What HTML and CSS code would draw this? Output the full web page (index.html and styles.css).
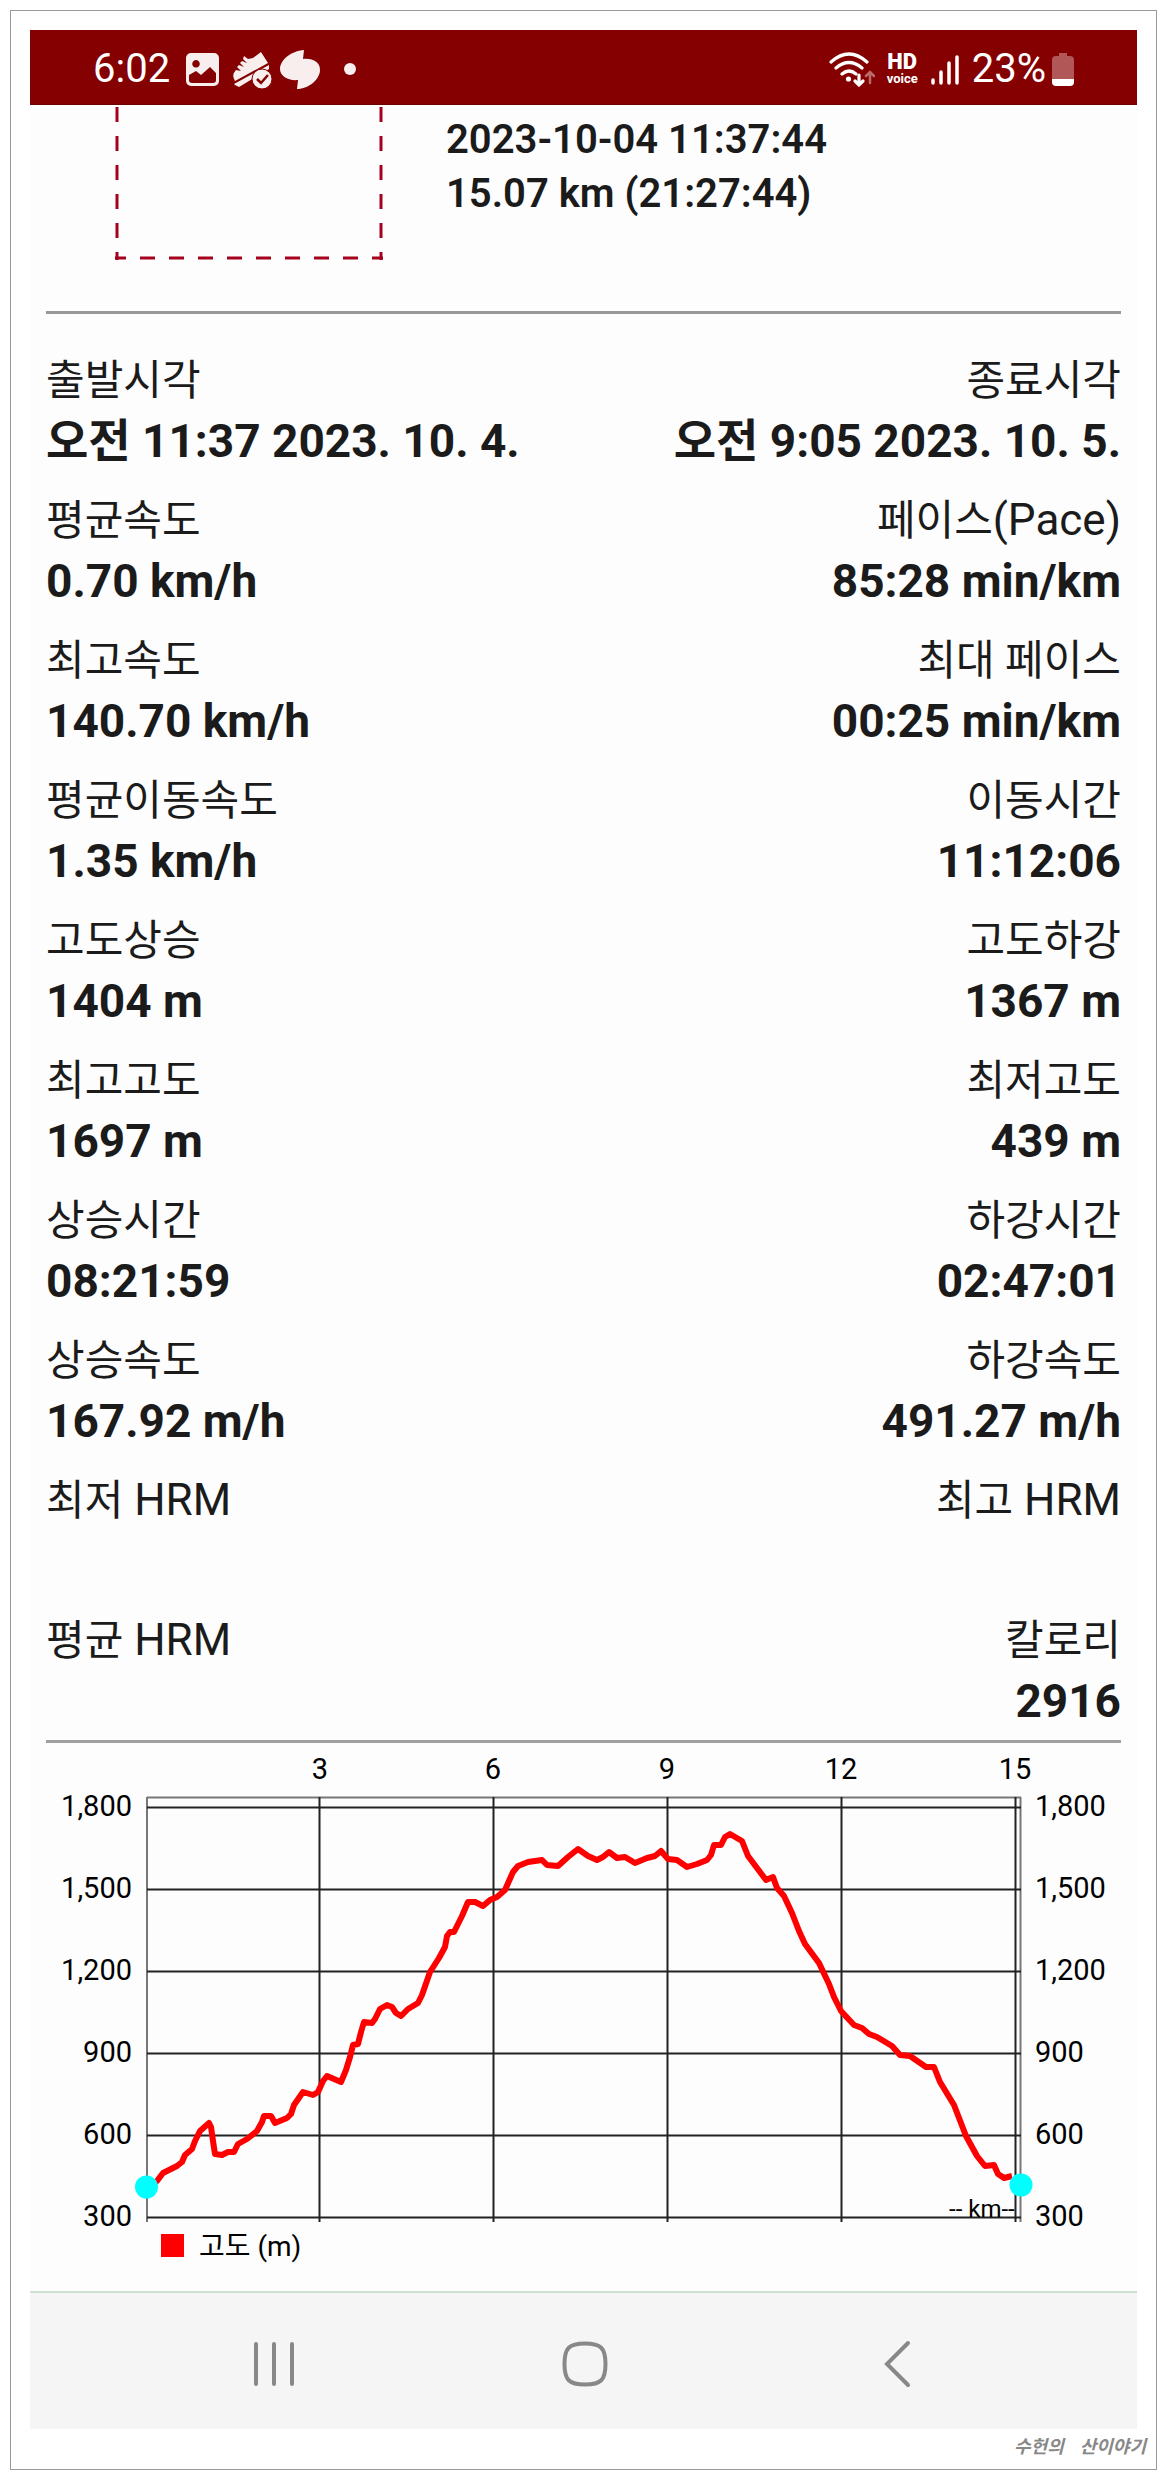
FILE: index.html
```html
<!DOCTYPE html>
<html lang="ko">
<head>
<meta charset="utf-8">
<meta name="viewport" content="width=device-width, initial-scale=1">
<title>산행 기록</title>
<link rel="stylesheet" href="styles.css">
</head>
<body>
<div class="frame">
  <div class="phone">
    <header class="status">
      <div class="status-side">
        <span class="status-text">6:02</span>
        <svg class="status-icon" viewBox="0 0 42 42" aria-hidden="true">
          <path fill="#f8eeee" fill-rule="evenodd" d="M8 5h23a5 5 0 0 1 5 5v23a5 5 0 0 1-5 5H8a5 5 0 0 1-5-5V10a5 5 0 0 1 5-5zM13 12a3.800 3.800 0 1 0 .01 0zM6 27v5q0 3 3 3h21q3 0 3-3v-7l-6-6-9 8-5-4z"/>
        </svg>
        <svg class="status-icon" viewBox="0 0 42 42" aria-hidden="true">
          <g fill="#f8eeee">
            <path d="M13 8l4 3 5-1 8-6 7 11L4 33Q0 27 5 22l5 1-4-4 2-2 5 2-4-4 2-2 5 2-4-4z"/>
            <path d="M38 17v4L8 39l-4-2-1-1z"/>
          </g>
          <circle cx="31" cy="31" r="10" fill="#f8eeee" stroke="#850000" stroke-width="1"/>
          <path d="M26 31l4 4 7-8" fill="none" stroke="#850000" stroke-width="2.500"/>
        </svg>
        <svg class="status-icon" viewBox="0 0 42 42" aria-hidden="true">
          <path fill="#f8eeee" d="M25 2l-1 9c10-1 17 3 17 11 0 9-11 19-23 19l1-9C9 33 1 28 1 21 1 12 12 3 25 2z"/>
        </svg>
        <svg class="status-icon" viewBox="0 0 42 42" aria-hidden="true"><circle cx="23" cy="21" r="6" fill="#f8eeee"/></svg>
      </div>
      <div class="status-side">
        <svg class="wifi" viewBox="0 0 46 42" aria-hidden="true">
          <g fill="none" stroke="#fff" stroke-width="3.200" stroke-linecap="round">
            <path d="M2 14q18-16 36 0M7 20q13-11 26 0M13 26q7-6 14 0"/>
            <path d="M30 27v10M26 33l4 4 4-4"/>
            <path d="M41 35V25M37 28l4-4 4 4" stroke="#b96a6a" stroke-width="2.500"/>
          </g>
          <circle cx="19.500" cy="31" r="2.600" fill="#fff"/>
        </svg>
        <span class="hd"><b>HD</b><span>voice</span></span>
        <svg class="signal" viewBox="0 0 30 42" aria-hidden="true">
          <path d="M3 32v3M11 24v11M19 15v20M27 9v26" stroke="#fff" stroke-width="3.500" stroke-linecap="round"/>
        </svg>
        <span class="charge">
          <span class="status-text">23%</span>
          <svg class="battery" viewBox="0 0 24 42" aria-hidden="true">
            <path d="M8 5h8v3h3q4 0 4 4v19H1V12q0-4 4-4h3z" fill="#b25757"/>
            <path d="M1 31h22v3q0 4-4 4H5q-4 0-4-4z" fill="#fff"/>
          </svg>
        </span>
      </div>
    </header>

    <main>
      <section class="summary">
        <svg class="photo-slot" viewBox="0 0 268 155" aria-hidden="true">
          <g fill="none" stroke="#a5001e" stroke-width="3">
            <path d="M2 2v153M266 2v153" stroke-dasharray="15 14"/>
            <path d="M0 153h11M257 153h11"/>
            <path d="M25 153h230" stroke-dasharray="15 14"/>
          </g>
        </svg>
        <p class="summary-text">2023-10-04 11:37:44<br>15.07 km (21:27:44)</p>
      </section>

      <dl class="stats">
        <div class="stat"><dt>출발시각</dt><dd>오전 11:37 2023. 10. 4.</dd></div>
        <div class="stat"><dt>종료시각</dt><dd>오전 9:05 2023. 10. 5.</dd></div>
        <div class="stat"><dt>평균속도</dt><dd>0.70 km/h</dd></div>
        <div class="stat"><dt>페이스<span class="latin">(Pace)</span></dt><dd>85:28 min/km</dd></div>
        <div class="stat"><dt>최고속도</dt><dd>140.70 km/h</dd></div>
        <div class="stat"><dt>최대 페이스</dt><dd>00:25 min/km</dd></div>
        <div class="stat"><dt>평균이동속도</dt><dd>1.35 km/h</dd></div>
        <div class="stat"><dt>이동시간</dt><dd>11:12:06</dd></div>
        <div class="stat"><dt>고도상승</dt><dd>1404 m</dd></div>
        <div class="stat"><dt>고도하강</dt><dd>1367 m</dd></div>
        <div class="stat"><dt>최고고도</dt><dd>1697 m</dd></div>
        <div class="stat"><dt>최저고도</dt><dd>439 m</dd></div>
        <div class="stat"><dt>상승시간</dt><dd>08:21:59</dd></div>
        <div class="stat"><dt>하강시간</dt><dd>02:47:01</dd></div>
        <div class="stat"><dt>상승속도</dt><dd>167.92 m/h</dd></div>
        <div class="stat"><dt>하강속도</dt><dd>491.27 m/h</dd></div>
        <div class="stat"><dt>최저<span class="latin"> HRM</span></dt><dd></dd></div>
        <div class="stat"><dt>최고<span class="latin"> HRM</span></dt><dd></dd></div>
        <div class="stat"><dt>평균<span class="latin"> HRM</span></dt><dd></dd></div>
        <div class="stat"><dt>칼로리</dt><dd>2916</dd></div>
      </dl>

      <svg class="chart" viewBox="46 1743 1075 548" role="img" aria-label="고도 (m)">
        <g class="grid">
          <path class="edge" d="M147 1797.500H1021M147 1797V2222M1020.500 1797V2222"/>
          <path d="M147 1807.500H1021M147 1889.500H1021M147 1971.500H1021M147 2053.500H1021M147 2135.500H1021M147 2217.500H1021"/>
          <path d="M319.500 1797V2222M493.500 1797V2222M667.500 1797V2222M841.500 1797V2222M1015.500 1797V2222"/>
        </g>
        <g class="tick middle">
          <text x="320" y="1779">3</text><text x="493" y="1779">6</text><text x="667" y="1779">9</text><text x="841" y="1779">12</text><text x="1015" y="1779">15</text>
        </g>
        <g class="tick end">
          <text x="132" y="1816">1,800</text><text x="132" y="1898">1,500</text><text x="132" y="1980">1,200</text><text x="132" y="2062">900</text><text x="132" y="2144">600</text><text x="132" y="2226">300</text>
        </g>
        <g class="tick">
          <text x="1035" y="1816">1,800</text><text x="1035" y="1898">1,500</text><text x="1035" y="1980">1,200</text><text x="1035" y="2062">900</text><text x="1035" y="2144">600</text><text x="1035" y="2226">300</text>
        </g>
        <text class="unit" x="949" y="2217">-- km--</text>
        <polyline class="line" points="147,2187 157,2181 163,2173 177,2166 182,2162 185,2155 192,2149 195,2141 200,2131 209,2123 211,2127 213,2141 215,2154 222,2155 228,2152 234,2152 238,2144 247,2139 257,2131 262,2122 264,2116 271,2116 275,2123 287,2118 291,2114 294,2105 303,2092 313,2095 318,2092 323,2081 327,2076 341,2082 346,2070 350,2057 353,2045 358,2044 361,2032 364,2022 372,2023 375,2019 380,2009 387,2005 392,2007 396,2013 401,2016 408,2009 418,2003 422,1995 430,1972 439,1958 445,1947 447,1936 450,1932 454,1932 462,1916 468,1902 475,1902 483,1906 490,1900 497,1897 505,1890 513,1872 518,1866 528,1862 542,1860 547,1865 558,1866 568,1857 578,1849 588,1856 597,1860 603,1857 609,1852 617,1858 625,1857 635,1863 647,1858 655,1856 661,1851 668,1859 677,1860 687,1867 697,1864 707,1860 711,1855 714,1845 721,1845 725,1837 730,1834 742,1841 748,1856 757,1868 766,1880 773,1877 777,1888 784,1896 792,1913 799,1931 805,1944 819,1963 829,1984 834,1997 841,2011 854,2025 862,2028 869,2034 877,2037 892,2046 900,2055 910,2056 926,2067 934,2067 940,2082 954,2105 966,2136 977,2156 985,2166 994,2165 998,2174 1004,2178 1012,2176"/>
        <circle cx="146.500" cy="2187" r="11.500" fill="#0ff"/>
        <circle cx="1021" cy="2185" r="11.500" fill="#0ff"/>
        <rect x="161" y="2234" width="23" height="23" fill="#f00"/>
        <text class="legend" x="199" y="2256">고도 (m)</text>
      </svg>
    </main>

    <nav class="nav">
      <button type="button" aria-label="최근 앱">
        <svg viewBox="0 0 50 50"><path d="M7 4v40M25 4v40M43 4v40"/></svg>
      </button>
      <button type="button" aria-label="홈">
        <svg viewBox="0 0 50 50"><path d="M25 3.500C41 3.500 45.500 8 45.500 24S41 44.500 25 44.500 4.500 40 4.500 24 9 3.500 25 3.500z"/></svg>
      </button>
      <button type="button" aria-label="뒤로">
        <svg viewBox="0 0 50 50"><path d="M36 3L15 24l21 21"/></svg>
      </button>
    </nav>
  </div>
  <footer class="signature"><span>수헌의</span><span>산이야기</span></footer>
</div>
</body>
</html>
```
FILE: styles.css
```css
* {
  box-sizing: border-box;
}

body {
  margin: 10px;
  background: #fff;
  color: #1b1b1b;
  font-family: Roboto, "Noto Sans CJK KR", sans-serif;
}

p,
dl,
dd {
  margin: 0;
}

svg {
  display: block;
  flex: none;
}

.frame {
  position: relative;
  padding: 19px 19px 0;
  border: 1px solid #999;
  background: #fff;
}

/* lifted paper corners */
.frame::before,
.frame::after {
  content: "";
  position: absolute;
  top: 100%;
  width: 90px;
  height: 9px;
  margin-top: 1px;
  background: linear-gradient(to bottom, #aaa, #f5f5f5);
}

.frame::before {
  left: 3px;
  clip-path: polygon(0 0, 100% 0, 6% 100%);
}

.frame::after {
  right: 3px;
  clip-path: polygon(0 0, 100% 0, 94% 100%);
}

.phone {
  background: #fdfdfd;
}

/* status bar */
.status {
  display: flex;
  justify-content: space-between;
  align-items: center;
  height: 75px;
  padding: 4px 62px 0 63px;
  background: #850000;
  border-bottom: 1px solid #6d0000;
  color: #fff;
}

.status-side {
  display: flex;
  align-items: center;
  gap: 6px;
}

.status-side:last-child {
  gap: 12px;
}

.status-text {
  font-size: 40px;
  line-height: 42px;
}

.status-side > .status-text {
  padding-right: 7px;
}

.status-icon {
  width: 42px;
  height: 42px;
}

.wifi {
  width: 46px;
  height: 42px;
}

.hd {
  display: flex;
  flex-direction: column;
  align-items: center;
  font-weight: 700;
  font-size: 13px;
  line-height: 14px;
}

.hd b {
  font-size: 22px;
  line-height: 20px;
  font-weight: 900;
}

.signal {
  width: 30px;
  height: 42px;
}

.charge {
  display: flex;
  align-items: center;
  gap: 5px;
}

.battery {
  width: 24px;
  height: 42px;
}

/* summary */
main {
  padding: 0 16px;
}

.summary {
  display: flex;
  gap: 63px;
  padding: 0 0 51px 69px;
  border-bottom: 3px solid #999;
}

.photo-slot {
  width: 268px;
  height: 155px;
}

.summary-text {
  padding-top: 8px;
  font-size: 40px;
  line-height: 54px;
  font-weight: 600;
}

/* statistics */
.stats {
  display: grid;
  grid-template-columns: auto auto;
  justify-content: space-between;
  row-gap: 20px;
  padding: 36px 0 10px;
  border-bottom: 3px solid #a0a0a0;
}

.stat:nth-child(even) {
  text-align: right;
}

.stat dt {
  font-size: 42px;
  line-height: 62px;
}

.latin {
  font-size: 44px;
  line-height: 1;
}

.stat dd {
  min-height: 58px;
  font-size: 46px;
  line-height: 58px;
  font-weight: 700;
}

/* altitude chart */
.chart {
  width: 100%;
  height: auto;
}

.grid {
  fill: none;
  stroke: #222;
  stroke-width: 2;
}

.grid .edge {
  stroke: #777;
}

.tick {
  font-size: 29px;
  fill: #000;
}

.middle {
  text-anchor: middle;
}

.end {
  text-anchor: end;
}

.unit {
  font-size: 24px;
}

.legend {
  font-size: 28px;
}

.line {
  fill: none;
  stroke: #f00;
  stroke-width: 6;
  stroke-linejoin: round;
}

/* navigation bar */
.nav {
  display: grid;
  grid-template-columns: repeat(3, 1fr);
  height: 138px;
  padding: 8px 84px 0 88px;
  background: #f5f5f5;
  border-top: 2px solid #cde0d3;
}

.nav button {
  display: grid;
  place-items: center;
  padding: 0;
  border: 0;
  background: none;
}

.nav svg {
  width: 50px;
  height: 50px;
  fill: none;
  stroke: #888;
  stroke-width: 4;
  stroke-linecap: round;
}

.signature {
  display: flex;
  justify-content: flex-end;
  gap: 16px;
  height: 40px;
  padding-top: 4px;
  margin-right: -9px;
  color: #888;
  font-size: 18px;
  line-height: 28px;
  font-weight: 700;
  font-style: italic;
}
```
